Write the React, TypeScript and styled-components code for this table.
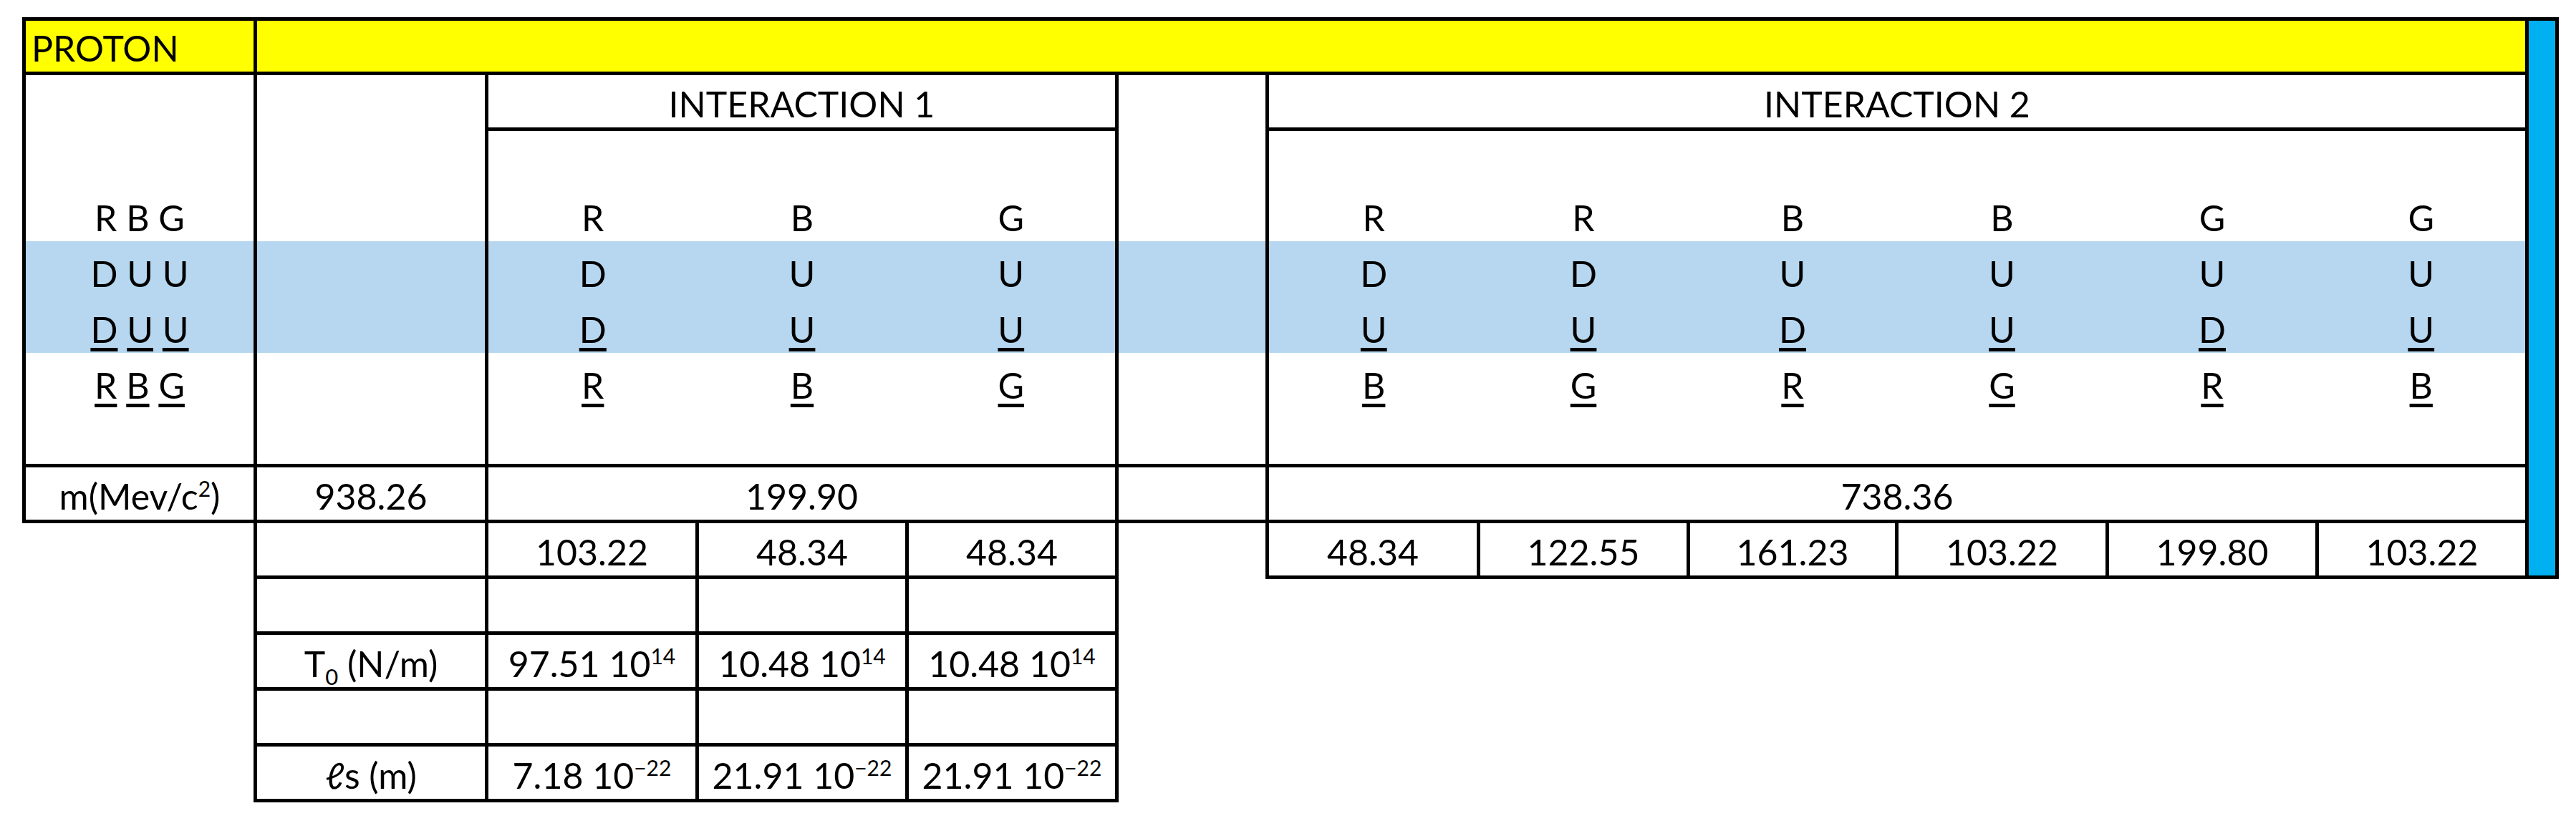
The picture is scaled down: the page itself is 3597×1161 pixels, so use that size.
import React from "react";
import styled, { createGlobalStyle } from "styled-components";

const LINE = "5px solid #000";
const YELLOW = "#ffff00";
const BAND = "#b6d7ef";
const CYAN = "#00b0f0";

const GlobalStyle = createGlobalStyle`
  html, body {
    margin: 0;
    background: #fff;
  }
  body {
    font-family: Lato, "DejaVu Sans", sans-serif;
    color: #000;
  }
`;

const Page = styled.div`
  padding: 24px 0 0 31px;
`;

const Sheet = styled.table`
  border-collapse: collapse;
  table-layout: fixed;
  font-size: 50px;
  line-height: 1.2;
`;

const Row = styled.tr<{ $h: number }>`
  height: ${(p) => p.$h}px;
`;

const Cell = styled.td<{ $edges?: string; $bg?: string; $align?: "left" | "center" }>`
  padding: 0 8px 3px;
  vertical-align: bottom;
  white-space: nowrap;
  text-align: ${(p) => p.$align ?? "center"};
  background: ${(p) => p.$bg ?? "transparent"};
  border-top: ${(p) => (p.$edges?.includes("t") ? LINE : "none")};
  border-right: ${(p) => (p.$edges?.includes("r") ? LINE : "none")};
  border-bottom: ${(p) => (p.$edges?.includes("b") ? LINE : "none")};
  border-left: ${(p) => (p.$edges?.includes("l") ? LINE : "none")};
`;

const SideBar = styled.td`
  padding: 0;
  background: ${CYAN};
  border: ${LINE};
`;

const Ul = styled.span`
  text-decoration: underline;
  text-decoration-thickness: 5px;
  text-underline-offset: 7px;
`;

const Sup = styled.span`
  font-size: 30px;
  line-height: 0;
  vertical-align: 18px;
`;

const Sub = styled.span`
  font-size: 31px;
  line-height: 0;
  vertical-align: -11px;
`;

const widths = [323, 323, 294, 293, 293, 210, 295, 293, 291, 294, 293, 293, 42];

type QuarkRow = { a: string; i1: string[]; i2: string[]; bg?: string; ul?: boolean };

const quarkRows: QuarkRow[] = [
  { a: "R B G", i1: ["R", "B", "G"], i2: ["R", "R", "B", "B", "G", "G"] },
  { a: "D U U", i1: ["D", "U", "U"], i2: ["D", "D", "U", "U", "U", "U"], bg: BAND },
  { a: "D U U", i1: ["D", "U", "U"], i2: ["U", "U", "D", "U", "D", "U"], bg: BAND, ul: true },
  { a: "R B G", i1: ["R", "B", "G"], i2: ["B", "G", "R", "G", "R", "B"], ul: true },
];

const splitMasses = ["48.34", "122.55", "161.23", "103.22", "199.80", "103.22"];

const Letters = ({ text, ul }: { text: string; ul?: boolean }) => {
  if (!ul) return <>{text}</>;
  const parts = text.split(" ");
  return (
    <>
      {parts.map((p, i) => (
        <React.Fragment key={i}>
          {i > 0 && " "}
          <Ul>{p}</Ul>
        </React.Fragment>
      ))}
    </>
  );
};

// one row of the big quark block: A | B | I1 x3 | gap | I2 x6
const BlockRow = ({ h, row, last }: { h: number; row?: QuarkRow; last?: boolean }) => {
  const b = last ? "b" : "";
  const bg = row?.bg;
  return (
    <Row $h={h}>
      <Cell $edges={"lr" + b} $bg={bg}>
        {row && <Letters text={row.a} ul={row.ul} />}
      </Cell>
      <Cell $edges={"lr" + b} $bg={bg} />
      {[0, 1, 2].map((i) => (
        <Cell key={i} $edges={(i === 0 ? "l" : i === 2 ? "r" : "") + b} $bg={bg}>
          {row && <Letters text={row.i1[i]} ul={row.ul} />}
        </Cell>
      ))}
      <Cell $edges={"lr" + b} $bg={bg} />
      {[0, 1, 2, 3, 4, 5].map((i) => (
        <Cell key={i} $edges={(i === 0 ? "l" : i === 5 ? "r" : "") + b} $bg={bg}>
          {row && <Letters text={row.i2[i]} ul={row.ul} />}
        </Cell>
      ))}
    </Row>
  );
};

const Pow = ({ base, exp }: { base: string; exp: string }) => (
  <>
    {base} 10<Sup>{exp}</Sup>
  </>
);

export default function App() {
  return (
    <>
      <GlobalStyle />
      <Page>
        <Sheet>
          <colgroup>
            {widths.map((w, i) => (
              <col key={i} style={{ width: w }} />
            ))}
          </colgroup>
          <tbody>
            <Row $h={76}>
              <Cell $edges="tlrb" $bg={YELLOW} $align="left">
                PROTON
              </Cell>
              <Cell colSpan={11} $edges="tlrb" $bg={YELLOW} />
              <SideBar rowSpan={10} />
            </Row>

            <Row $h={78}>
              <Cell $edges="lr" />
              <Cell $edges="lr" />
              <Cell colSpan={3} $edges="lrb">
                INTERACTION 1
              </Cell>
              <Cell $edges="lr" />
              <Cell colSpan={6} $edges="lrb">
                INTERACTION 2
              </Cell>
            </Row>

            <BlockRow h={78} />
            {quarkRows.map((r, i) => (
              <BlockRow key={i} h={78} row={r} />
            ))}
            <BlockRow h={80} last />

            <Row $h={78}>
              <Cell $edges="tlrb">
                m(Mev/c<Sup>2</Sup>)
              </Cell>
              <Cell $edges="tlrb">938.26</Cell>
              <Cell colSpan={3} $edges="tlrb">
                199.90
              </Cell>
              <Cell $edges="tlrb" />
              <Cell colSpan={6} $edges="tlrb">
                738.36
              </Cell>
            </Row>

            <Row $h={78}>
              <Cell />
              <Cell $edges="tlrb" />
              <Cell $edges="tlrb">103.22</Cell>
              <Cell $edges="tlrb">48.34</Cell>
              <Cell $edges="tlrb">48.34</Cell>
              <Cell />
              {splitMasses.map((m, i) => (
                <Cell key={i} $edges="tlrb">
                  {m}
                </Cell>
              ))}
            </Row>

            <Row $h={78}>
              <Cell />
              <Cell $edges="tlrb" />
              <Cell $edges="tlrb" />
              <Cell $edges="tlrb" />
              <Cell $edges="tlrb" />
            </Row>

            <Row $h={78}>
              <Cell />
              <Cell $edges="tlrb">
                T<Sub>0</Sub> (N/m)
              </Cell>
              <Cell $edges="tlrb">
                <Pow base="97.51" exp="14" />
              </Cell>
              <Cell $edges="tlrb">
                <Pow base="10.48" exp="14" />
              </Cell>
              <Cell $edges="tlrb">
                <Pow base="10.48" exp="14" />
              </Cell>
            </Row>

            <Row $h={78}>
              <Cell />
              <Cell $edges="tlrb" />
              <Cell $edges="tlrb" />
              <Cell $edges="tlrb" />
              <Cell $edges="tlrb" />
            </Row>

            <Row $h={78}>
              <Cell />
              <Cell $edges="tlrb">ℓs (m)</Cell>
              <Cell $edges="tlrb">
                <Pow base="7.18" exp="−22" />
              </Cell>
              <Cell $edges="tlrb">
                <Pow base="21.91" exp="−22" />
              </Cell>
              <Cell $edges="tlrb">
                <Pow base="21.91" exp="−22" />
              </Cell>
            </Row>
          </tbody>
        </Sheet>
      </Page>
    </>
  );
}
